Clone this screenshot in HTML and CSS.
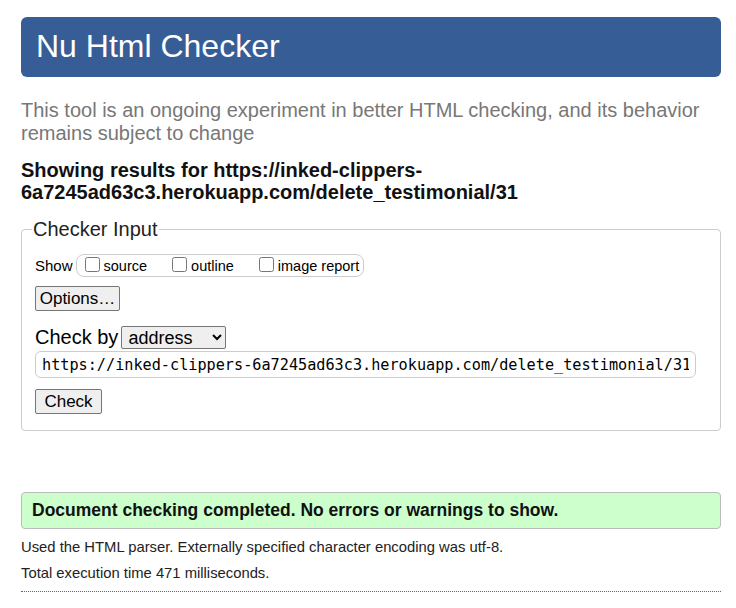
FILE: index.html
```html
<!DOCTYPE html>
<html>
<head>
<meta charset="utf-8">
<title>Nu Html Checker</title>
<link rel="stylesheet" href="styles.css">
</head>
<body>
<div class="page">
  <header class="banner"><h1 class="banner-title">Nu Html Checker</h1></header>
  <p class="intro">This tool is an ongoing experiment in better HTML checking, and its behavior remains subject to change</p>
  <h2 class="results-for">Showing results for https://inked-clippers-6a7245ad63c3.herokuapp.com/delete_testimonial/31</h2>
  <fieldset class="checker">
    <legend class="checker-legend">Checker Input</legend>
    <div class="show-row">
      <span class="show-label">Show</span>
      <fieldset class="show-opts">
        <label class="opt"><input type="checkbox" class="cb"> source</label>
        <label class="opt"><input type="checkbox" class="cb"> outline</label>
        <label class="opt"><input type="checkbox" class="cb"> image report</label>
      </fieldset>
    </div>
    <div class="row-options"><button class="btn btn-options">Options…</button></div>
    <div class="checkby-row">
      <span class="checkby-label">Check by</span>
      <select class="sel"><option>address</option></select>
    </div>
    <div class="row-url"><input class="url" type="text" value="https://inked-clippers-6a7245ad63c3.herokuapp.com/delete_testimonial/31"></div>
    <div class="row-check"><button class="btn btn-check">Check</button></div>
  </fieldset>
  <p class="success">Document checking completed. No errors or warnings to show.</p>
  <p class="info">Used the HTML parser. Externally specified character encoding was utf-8.</p>
  <p class="info">Total execution time 471 milliseconds.</p>
  <hr class="rule">
</div>
</body>
</html>
```
FILE: styles.css
```css
html, body { margin: 0; padding: 0; background: #fff; }
body { font-family: "Liberation Sans", Arial, sans-serif; color: #000; }
.page { width: 700px; margin-left: 21px; padding-top: 17px; }
.banner { background: #365d95; border-radius: 6px; height: 60px; display: flex; align-items: center; padding: 0 15px; }
.banner-title { margin: 0; font-size: 32px; font-weight: normal; color: #fff; line-height: 1; position: relative; top: -1px; }
.intro { margin: 22px 0 0; font-size: 20px; line-height: 23px; color: #777; }
.results-for { margin: 14px 0 0; font-size: 20px; line-height: 22px; font-weight: bold; color: #111; }
.checker { margin: 15px 0 0; border: 1px solid #ccc; border-radius: 4px; padding: 13px 13px 16px; }
.checker-legend { font-size: 20px; padding: 0 1px; margin-left: -3px; color: #222; }
.show-row { display: flex; align-items: center; }
.show-label { font-size: 15px; margin-right: 3px; }
.show-opts { margin: 0; border: 1px solid #ccc; border-radius: 8px; padding: 0 4px 0 8px; display: flex; height: 23px; box-sizing: border-box; align-items: center; }
.opt { font-size: 14.5px; display: flex; align-items: center; margin-right: 25px; }
.opt:last-child { margin-right: 0; }
.cb { margin: 0 4px 3px 0; width: 15px; height: 15px; }
.btn { font-family: "Liberation Sans", Arial, sans-serif; font-size: 17px; border: 1px solid #767676; border-radius: 2px; background: #efefef; color: #000; height: 25px; box-sizing: border-box; }
.row-options { margin-top: 9px; }
.btn-options { padding: 0 3px; width: 85px; }
.checkby-row { display: flex; align-items: center; margin-top: 15px; }
.checkby-label { font-size: 20px; margin-right: 3px; }
.sel { font-family: "Liberation Sans", Arial, sans-serif; font-size: 18px; width: 105px; height: 23px; border: 1px solid #767676; border-radius: 2px; padding: 0 2px; }
.row-url { margin-top: 2px; }
.url { font-family: "DejaVu Sans Mono", monospace; font-size: 15.2px; width: 661px; height: 27px; box-sizing: border-box; border: 1px solid #ccc; border-radius: 6px; padding: 0 6px; color: #000; }
.row-check { margin-top: 11px; }
.btn-check { width: 67px; padding: 0; }
.success { margin: 61px 0 0; background: #ccffcc; border: 1px solid #bbb; border-radius: 4px; font-weight: bold; font-size: 17.5px; padding: 7px 10px 8px; line-height: 20px; color: #111; }
.info { margin: 10px 0 0; font-size: 14.8px; line-height: 16px; color: #222; }
.rule { margin: 10px 0 0; border: 0; border-top: 1px dotted #666; }
```
